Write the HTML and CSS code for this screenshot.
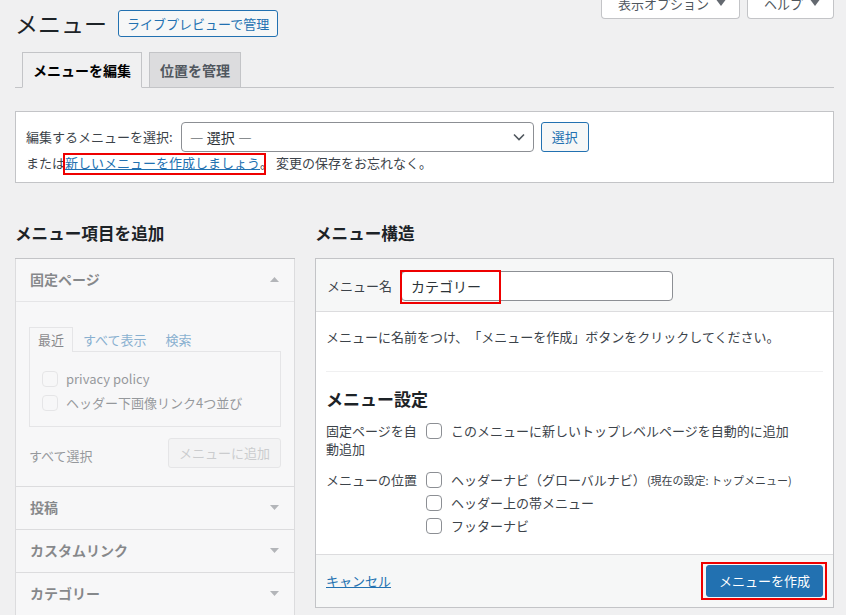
FILE: index.html
```html
<!DOCTYPE html>
<html lang="ja">
<head>
<meta charset="utf-8">
<title>メニュー</title>
<link rel="stylesheet" href="styles.css">
</head>
<body>
<div class="wrap">
  <div class="page-head">
    <div class="title-row">
      <h1 class="title">メニュー</h1>
      <a class="btn-outline" href="#">ライブプレビューで管理</a>
    </div>
    <div class="screen-links">
      <span class="screen-btn">表示オプション<svg class="screen-arrow" width="14" height="20" viewBox="0 0 14 20"><path d="M2.5 6h9l-4.5 6z" fill="#646970"/></svg></span>
      <span class="screen-btn">ヘルプ<svg class="screen-arrow" width="14" height="20" viewBox="0 0 14 20"><path d="M2.5 6h9l-4.5 6z" fill="#646970"/></svg></span>
    </div>
  </div>

  <nav class="tabs">
    <span class="tab active">メニューを編集</span>
    <span class="tab">位置を管理</span>
  </nav>

  <div class="manage">
    <div class="manage-row">
      <span class="manage-label">編集するメニューを選択:</span>
      <div class="select"><span>— 選択 —</span><svg width="12" height="8" viewBox="0 0 12 8"><path d="M1 1.5l5 5 5-5" stroke="#50575e" stroke-width="1.6" fill="none"/></svg></div>
      <span class="btn-select">選択</span>
    </div>
    <div class="manage-note">または<a class="link-new mark" href="#">新しいメニューを作成しましょう</a>。 変更の保存をお忘れなく。</div>
  </div>

  <div class="columns">
    <div class="col-left">
      <h2 class="col-title">メニュー項目を追加</h2>
      <div class="acc">
        <div class="acc-sec">
          <div class="acc-title open"><span>固定ページ</span><svg width="9" height="5" viewBox="0 0 9 5"><path d="M0 5h9L4.5 0z" fill="#787c82"/></svg></div>
          <div class="acc-content">
            <div class="ptabs">
              <span class="ptab active">最近</span>
              <span class="ptab">すべて表示</span>
              <span class="ptab">検索</span>
            </div>
            <div class="ppanel">
              <label class="prow"><input class="cb cb-dis" type="checkbox" disabled>privacy policy</label>
              <label class="prow"><input class="cb cb-dis" type="checkbox" disabled>ヘッダー下画像リンク4つ並び</label>
            </div>
            <div class="select-all">
              <span class="select-all-text">すべて選択</span>
              <span class="btn-dis">メニューに追加</span>
            </div>
          </div>
        </div>
        <div class="acc-sec">
          <div class="acc-title"><span>投稿</span><svg width="9" height="5" viewBox="0 0 9 5"><path d="M0 0h9L4.5 5z" fill="#787c82"/></svg></div>
        </div>
        <div class="acc-sec">
          <div class="acc-title"><span>カスタムリンク</span><svg width="9" height="5" viewBox="0 0 9 5"><path d="M0 0h9L4.5 5z" fill="#787c82"/></svg></div>
        </div>
        <div class="acc-sec">
          <div class="acc-title"><span>カテゴリー</span><svg width="9" height="5" viewBox="0 0 9 5"><path d="M0 0h9L4.5 5z" fill="#787c82"/></svg></div>
        </div>
      </div>
    </div>

    <div class="col-right">
      <h2 class="col-title">メニュー構造</h2>
      <div class="box">
        <div class="box-head">
          <label class="name-label">メニュー名</label>
          <span class="name-field mark"><input class="name-input" type="text" value="カテゴリー"></span>
        </div>
        <div class="box-body">
          <p class="hint">メニューに名前をつけ、「メニューを作成」ボタンをクリックしてください。</p>
          <hr class="sep">
          <h3 class="settings-title">メニュー設定</h3>
          <div class="settings">
            <div class="set-label">固定ページを自動追加</div>
            <div class="set-value">
              <label class="opt"><input class="cb" type="checkbox">このメニューに新しいトップレベルページを自動的に追加</label>
            </div>
            <div class="set-label">メニューの位置</div>
            <div class="set-value opts">
              <label class="opt"><input class="cb" type="checkbox"><span>ヘッダーナビ（グローバルナビ）<span class="cur">(現在の設定: トップメニュー)</span></span></label>
              <label class="opt"><input class="cb" type="checkbox">ヘッダー上の帯メニュー</label>
              <label class="opt"><input class="cb" type="checkbox">フッターナビ</label>
            </div>
          </div>
        </div>
        <div class="box-foot">
          <a class="cancel" href="#">キャンセル</a>
          <span class="btn-primary mark">メニューを作成</span>
        </div>
      </div>
    </div>
  </div>
</div>
</body>
</html>
```
FILE: styles.css
```css
* { box-sizing: border-box; }
html, body { margin: 0; padding: 0; }
body {
  background: #f0f0f1;
  color: #3c434a;
  font-family: "Noto Sans CJK JP", "Noto Sans", sans-serif;
  font-size: 13px;
  line-height: 20px;
  height: 615px;
  overflow: hidden;
  text-spacing-trim: space-all;
}
.wrap { padding: 0 12px 0 15px; }

/* header */
.page-head { display: flex; justify-content: space-between; align-items: flex-start; }
.title-row { display: flex; align-items: center; gap: 11px; padding-top: 9px; }
.title { margin: 0; font-size: 23px; font-weight: 400; line-height: 29px; color: #1d2327; }
.btn-outline {
  display: inline-block; height: 27px; padding: 0 8px;
  border: 1px solid #2271b1; border-radius: 3px; background: #f6f7f7;
  color: #2271b1; font-size: 13px; line-height: 25px; text-decoration: none;
}
.screen-links { display: flex; gap: 7px; margin-top: -10px; }
.screen-btn {
  display: flex; align-items: center; gap: 5px; height: 29px;
  padding: 3px 11px 3px 16px; background: #fff;
  border: 1px solid #c3c4c7; border-top: none; border-radius: 0 0 4px 4px;
  color: #50575e; line-height: 22px;
}
.screen-arrow { flex: none; }

/* tabs */
.tabs { display: flex; gap: 7px; margin-top: 14px; padding-left: 7px; border-bottom: 1px solid #c3c4c7; }
.tab {
  margin-bottom: -1px; padding: 5px 10px; border: 1px solid #c3c4c7;
  background: #dcdcde; color: #50575e; font-size: 14px; font-weight: 700; line-height: 24px;
}
.tab.active { background: #f0f0f1; border-bottom-color: #f0f0f1; color: #000; }

/* manage */
.manage { margin-top: 23px; padding: 10px 10px 9px; background: #fff; border: 1px solid #c3c4c7; }
.manage-row { display: flex; align-items: center; }
.manage-label { margin-right: 8px; }
.select {
  width: 353px; height: 30px; display: flex; align-items: center; justify-content: space-between;
  padding: 0 8px; border: 1px solid #8c8f94; border-radius: 4px; background: #fff;
  font-size: 14px; color: #2c3338;
}
.btn-select {
  margin-left: 7px; height: 30px; padding: 0 10px; line-height: 28px;
  border: 1px solid #2271b1; border-radius: 3px; background: #f6f7f7; color: #2271b1;
}
.manage-note { margin-top: 1px; line-height: 20px; }
.link-new { display: inline-block; color: #2271b1; text-decoration: underline; }
.mark { position: relative; }
.mark::after { content: ""; position: absolute; border: 2px solid #ee0000; pointer-events: none; }
.link-new::after { left: -2px; top: 0; right: -6px; bottom: -2px; }

/* columns */
.columns { display: flex; gap: 20px; margin-top: 38px; align-items: flex-start; }
.col-left { width: 280px; flex: none; }
.col-right { flex: 1; }
.col-title { margin: 0 0 13px; font-size: 16.6px; font-weight: 700; line-height: 24px; color: #1d2327; }

/* accordion */
.acc { border-top: 1px solid #c3c4c7; }
.acc-sec { border: 1px solid #dcdcde; border-top: none; }
.acc-title, .acc-content { opacity: .5; background: #fff; }
.acc-title {
  display: flex; justify-content: space-between; align-items: center;
  padding: 10px 15px 11px 14px; font-size: 14px; font-weight: 700; line-height: 21px; color: #1d2327;
}
.acc-title.open { border-bottom: 1px solid #dcdcde; }
.acc-content { padding: 25px 13px 18px; }
.ptabs { display: flex; position: relative; z-index: 1; margin-bottom: -1px; }
.ptab {
  padding: 3px 8px; line-height: 18px; border: 1px solid transparent; border-bottom: none;
  margin-right: 1px; color: #2271b1;
}
.ptab.active { border-color: #dcdcde; background: #fff; color: #1d2327; }
.ppanel { border: 1px solid #dcdcde; padding: 15px 12px 11px; background: #fff; }
.prow { display: flex; align-items: center; gap: 8px; line-height: 24px; color: #3c434a; }
.select-all { display: flex; justify-content: space-between; align-items: center; margin-top: 11px; }
.select-all-text { margin-top: 6px; }
.btn-dis {
  height: 30px; padding: 0 10px; line-height: 28px; border: 1px solid #dcdcde;
  border-radius: 3px; background: #f6f7f7; color: #a7aaad;
}

/* checkbox */
.cb {
  appearance: none; -webkit-appearance: none; flex: none;
  width: 16px; height: 16px; margin: 0;
  border: 1px solid #8c8f94; border-radius: 4px; background: #fff;
}
.cb-dis { border-color: #dcdcde; }

/* right box */
.box { border: 1px solid #c3c4c7; background: #fff; }
.box-head {
  display: flex; align-items: center; gap: 9px;
  padding: 12px 10px 10px 11px; background: #f6f7f7; border-bottom: 1px solid #dcdcde;
}
.name-field { display: block; }
.name-field::after { left: -1px; top: -1px; width: 97px; height: 30px; }
.name-input {
  display: block; width: 272px; height: 30px; margin: 0; padding: 0 9px;
  border: 1px solid #8c8f94; border-radius: 4px; background: #fff;
  font-family: "Noto Sans CJK JP", sans-serif; font-size: 14px; color: #2c3338;
}
.box-body { padding: 0 10px 19px; }
.hint { margin: 15px 0 24px; line-height: 20px; }
.sep { margin: 0; border: 0; border-top: 1px solid #f0f0f1; }
.settings-title { margin: 15px 0 11px; font-size: 17px; font-weight: 700; line-height: 24px; color: #1d2327; }
.settings { display: grid; grid-template-columns: 100px 1fr; row-gap: 13px; line-height: 18px; }
.set-label { padding-right: 6px; }
.opts { display: flex; flex-direction: column; gap: 5px; }
.opt { display: flex; align-items: center; gap: 9px; line-height: 18px; }
.cur { font-size: 11px; margin-left: 1px; }
.box-foot {
  display: flex; justify-content: space-between; align-items: center;
  padding: 10px; background: #f6f7f7; border-top: 1px solid #dcdcde;
}
.cancel { color: #2271b1; text-decoration: underline; }
.btn-primary {
  display: inline-block; height: 32px; padding: 0 12px; line-height: 30px;
  border: 1px solid #2271b1; border-radius: 3px; background: #2271b1; color: #fff;
}
.btn-primary::after { left: -6px; top: -4px; right: -5px; bottom: -4px; }
```
